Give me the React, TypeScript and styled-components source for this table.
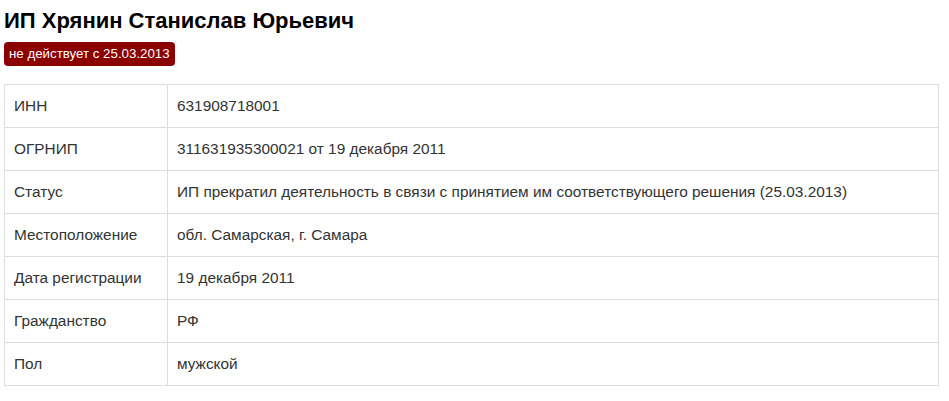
import React, {FC} from 'react';
import styled, {createGlobalStyle} from 'styled-components';

const rows: [string, string][] = [
  ['ИНН', '631908718001'],
  ['ОГРНИП', '311631935300021 от 19 декабря 2011'],
  ['Статус', 'ИП прекратил деятельность в связи с принятием им соответствующего решения (25.03.2013)'],
  ['Местоположение', 'обл. Самарская, г. Самара'],
  ['Дата регистрации', '19 декабря 2011'],
  ['Гражданство', 'РФ'],
  ['Пол', 'мужской'],
];

const App: FC = () => {
  return (
    <Page>
      <GlobalStyle />
      <Title>ИП Хрянин Станислав Юрьевич</Title>
      <Badge>не действует с 25.03.2013</Badge>
      <Table>
        <tbody>
          {rows.map(([label, value]) => (
            <tr key={label}>
              <Label>{label}</Label>
              <Value>{value}</Value>
            </tr>
          ))}
        </tbody>
      </Table>
    </Page>
  );
};

export default App;

const GlobalStyle = createGlobalStyle`
  body {
    margin: 0;
    background: #fff;
    font-family: "Liberation Sans", Arial, sans-serif;
    color: #333;
  }
`;

const Page = styled.div`
  padding: 0 10px 0 4px;
`;

const Title = styled.h1`
  margin: 0;
  padding-top: 8px;
  font-size: 22px;
  line-height: 26px;
  font-weight: bold;
  color: #000;
`;

const Badge = styled.div`
  display: inline-block;
  margin-top: 8px;
  height: 24px;
  line-height: 24px;
  padding: 0 5px;
  border-radius: 4px;
  background: #8b0000;
  color: #fff;
  font-size: 13.3px;
`;

const Table = styled.table`
  margin-top: 18px;
  width: 100%;
  border-collapse: collapse;
  font-size: 15.4px;
  line-height: 20px;
  td {
    border: 1px solid #ddd;
    padding: 11px 9px;
    vertical-align: middle;
  }
`;

const Label = styled.td`
  width: 144px;
`;

const Value = styled.td``;
